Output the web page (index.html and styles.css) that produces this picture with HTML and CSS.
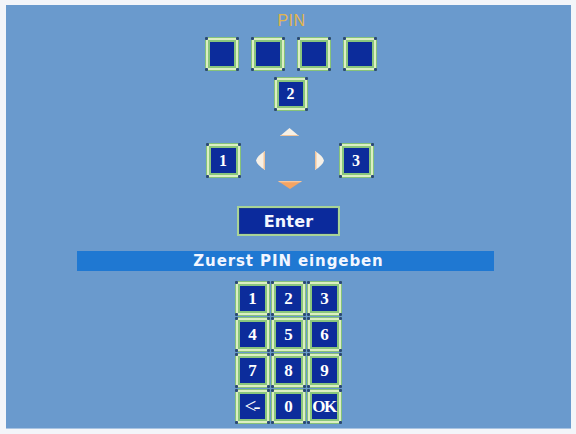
FILE: index.html
```html
<!DOCTYPE html>
<html lang="de">
<head>
<meta charset="utf-8">
<title>PIN</title>
<link rel="stylesheet" href="styles.css">
</head>
<body>
<div class="screen">
  <div class="title">PIN</div>
  <div class="pins">
    <div class="key"></div>
    <div class="key"></div>
    <div class="key"></div>
    <div class="key"></div>
  </div>
  <div class="key top-key">2</div>
  <div class="nav">
    <div class="up">
      <svg width="19" height="8" viewBox="0 0 19 8"><polygon points="9.5,0 19,8 0,8" fill="#f6f0e6"/><polygon points="1.5,7 17.5,7 19,8 0,8" fill="#f2c49a"/></svg>
    </div>
    <div class="key side">1</div>
    <div class="mid">
      <svg width="9" height="19" viewBox="0 0 9 19"><path d="M9,0 Q1,5 0,9.5 Q1,14 9,19 Z" fill="#f6f0e6"/><path d="M9,0 L9,19 L7.5,17.5 L7.5,1.5 Z" fill="#f2c49a"/></svg>
      <svg width="9" height="19" viewBox="0 0 9 19"><path d="M0,0 Q8,5 9,9.5 Q8,14 0,19 Z" fill="#f6f0e6"/><path d="M0,0 L0,19 L1.5,17.5 L1.5,1.5 Z" fill="#f2c49a"/></svg>
    </div>
    <div class="key side">3</div>
    <div class="down">
      <svg width="24" height="8" viewBox="0 0 24 8"><polygon points="0,0 24,0 12,8" fill="#f4a463"/><polygon points="0,0 24,0 22.5,1.2 1.5,1.2" fill="#f8c79c"/></svg>
    </div>
  </div>
  <div class="enter">Enter</div>
  <div class="message">Zuerst PIN eingeben</div>
  <div class="keypad">
    <div class="key">1</div>
    <div class="key">2</div>
    <div class="key">3</div>
    <div class="key">4</div>
    <div class="key">5</div>
    <div class="key">6</div>
    <div class="key">7</div>
    <div class="key">8</div>
    <div class="key">9</div>
    <div class="key back">&lt;-</div>
    <div class="key">0</div>
    <div class="key ok">OK</div>
  </div>
</div>
</body>
</html>
```

FILE: styles.css
```css
html, body {
  margin: 0;
  padding: 0;
}

body {
  width: 576px;
  height: 434px;
  background: #f3f5f9;
  overflow: hidden;
}

.screen {
  margin: 5px 5px 0 6px;
  height: 423px;
  box-sizing: border-box;
  padding-top: 8px;
  background: #6a9acd;
  display: flex;
  flex-direction: column;
  align-items: center;
  box-shadow: 0 1px 0 #a9c4e2;
}

.title {
  font-family: "Liberation Sans", Arial, sans-serif;
  font-size: 16px;
  line-height: 16px;
  letter-spacing: 0.5px;
  color: #e2b44e;
  margin-left: 6px;
}

.key {
  position: relative;
  box-sizing: border-box;
  width: 35px;
  height: 35px;
  background: #0c2c9b;
  border: 1px solid #86c278;
  box-shadow: inset 0 0 0 2px #dcefc2, inset 0 0 0 4px #8ac67c;
  color: #ffffff;
  font-family: "Liberation Serif", "Times New Roman", serif;
  font-weight: bold;
  font-size: 16px;
  display: flex;
  align-items: center;
  justify-content: center;
}

.key::before {
  content: "";
  position: absolute;
  inset: -1px;
  background:
    radial-gradient(circle at 1.5px 1.5px, #2a4878 1.3px, transparent 1.8px),
    radial-gradient(circle at calc(100% - 1.5px) 1.5px, #2a4878 1.3px, transparent 1.8px),
    radial-gradient(circle at 1.5px calc(100% - 1.5px), #2a4878 1.3px, transparent 1.8px),
    radial-gradient(circle at calc(100% - 1.5px) calc(100% - 1.5px), #2a4878 1.3px, transparent 1.8px);
  pointer-events: none;
}

.pins {
  display: flex;
  gap: 12px;
  margin-top: 8px;
  margin-left: 5px;
}

.pins .key {
  width: 34px;
  height: 34px;
}

.top-key {
  margin-top: 6px;
  margin-left: 4px;
  width: 34px;
  height: 34px;
}

.nav {
  margin-top: 14px;
  margin-left: 2px;
  display: grid;
  grid-template-columns: 35px 98px 35px;
  grid-template-rows: 18px 35px 12px;
}

.up {
  grid-column: 2;
  grid-row: 1;
  display: flex;
  justify-content: center;
  align-items: flex-start;
  padding-top: 3px;
}

.side {
  grid-row: 2;
}

.mid {
  grid-column: 2;
  grid-row: 2;
  display: flex;
  justify-content: space-between;
  align-items: center;
  padding: 0 15px;
}

.down {
  grid-column: 2;
  grid-row: 3;
  display: flex;
  justify-content: center;
  align-items: flex-start;
  padding-top: 3px;
  margin-left: 1px;
}

.up svg, .down svg, .mid svg {
  display: block;
}

.enter {
  margin-top: 16px;
  box-sizing: border-box;
  width: 103px;
  height: 30px;
  background: #0b2a9c;
  border: 2px solid #a9d496;
  box-shadow: inset 0 0 0 1px #1c3a8c;
  color: #f4f6ff;
  font-family: "DejaVu Sans", Verdana, sans-serif;
  font-weight: bold;
  font-size: 16px;
  letter-spacing: 0.2px;
  display: flex;
  align-items: center;
  justify-content: center;
}

.message {
  align-self: stretch;
  margin: 15px 77px 0 71px;
  height: 20px;
  background: #1f78d2;
  color: #f2f6ff;
  font-family: "DejaVu Sans", Verdana, sans-serif;
  font-weight: bold;
  font-size: 15px;
  letter-spacing: 0.9px;
  line-height: 20px;
  text-align: center;
  padding-left: 6px;
}

.keypad {
  margin-top: 10px;
  display: grid;
  grid-template-columns: repeat(3, 35px);
  grid-auto-rows: 35px;
  gap: 1px;
}

.keypad .key {
  font-size: 17px;
}

.keypad .ok {
  font-size: 17px;
  letter-spacing: -1.5px;
  padding-right: 1px;
}

.keypad .back {
  font-size: 21px;
  letter-spacing: -3px;
  font-weight: normal;
  padding-right: 3px;
}
```
